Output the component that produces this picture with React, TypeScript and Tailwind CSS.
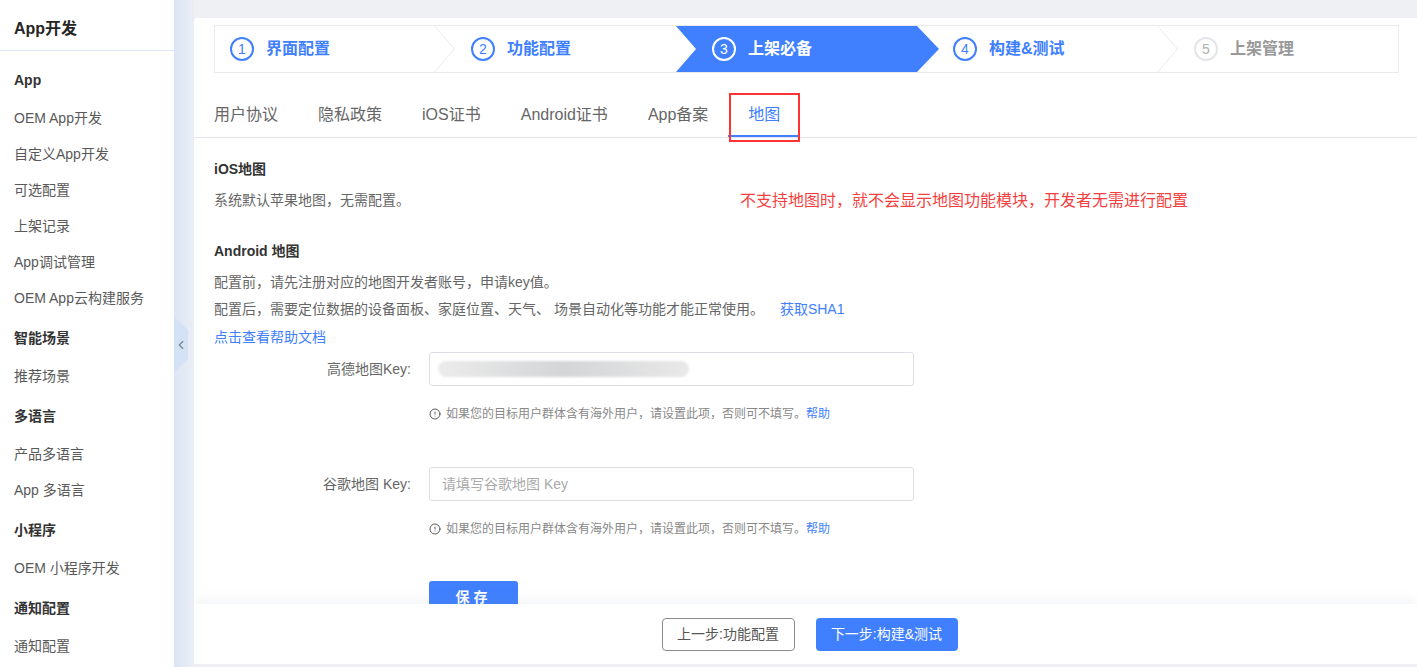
import { ChevronLeft, CircleAlert } from 'lucide-react';

const menu = [
  { title: 'App', items: ['OEM App开发', '自定义App开发', '可选配置', '上架记录', 'App调试管理', 'OEM App云构建服务'] },
  { title: '智能场景', items: ['推荐场景'] },
  { title: '多语言', items: ['产品多语言', 'App 多语言'] },
  { title: '小程序', items: ['OEM 小程序开发'] },
  { title: '通知配置', items: ['通知配置'] },
];

const steps = ['界面配置', '功能配置', '上架必备', '构建&测试', '上架管理'];
const tabs = ['用户协议', '隐私政策', 'iOS证书', 'Android证书', 'App备案', '地图'];

function Sidebar() {
  return (
    <aside className="w-[174px] shrink-0 bg-white flex flex-col">
      <div className="h-[51px] border-b border-[#dce6f2] px-[14px] pt-[8px] flex items-center text-[16px] font-bold text-[#262626]">
        App开发
      </div>
      <div className="pt-[7px]">
        {menu.map((group) => (
          <div key={group.title}>
            <div className="h-[42px] pt-[12px] px-[14px] leading-[20px] text-[14px] font-bold text-[#333]">{group.title}</div>
            {group.items.map((item) => (
              <div key={item} className="h-[36px] px-[14px] flex items-center text-[14px] text-[#595959]">
                {item}
              </div>
            ))}
          </div>
        ))}
      </div>
    </aside>
  );
}

function Steps() {
  const active = 2;
  return (
    <div className="h-[48px] border border-[#e8eaee] overflow-hidden">
      <div className="flex h-full ml-[-21px]">
        {steps.map((label, i) => {
          const isActive = i === active;
          const done = i < active || i === 3;
          return (
            <div key={label} className="relative w-[241px] shrink-0 h-full flex items-center pl-[36px]">
              {isActive && (
                <div className="absolute left-0 top-0 h-full w-[263px] bg-[#4080ff] [clip-path:polygon(0_0,241px_0,263px_50%,241px_100%,0_100%,20px_50%)]" />
              )}
              {!isActive && i !== active - 1 && i < 4 && (
                <svg className="absolute left-[240px] top-0 z-10" width="24" height="46" viewBox="0 0 24 46">
                  <polyline points="0.5,0 20.5,23 0.5,46" fill="none" stroke="#e8eaee" strokeWidth="1" />
                </svg>
              )}
              <div className="relative z-20 flex items-center">
                <span
                  className={`w-[24px] h-[24px] rounded-full border-2 flex items-center justify-center text-[14px] ${
                    isActive
                      ? 'border-white text-white'
                      : done
                        ? 'border-[#4080ff] text-[#4080ff]'
                        : 'border-[#e4e6ea] text-[#b0b0b0]'
                  }`}
                >
                  {i + 1}
                </span>
                <span
                  className={`ml-[12px] text-[16px] font-bold ${
                    isActive ? 'text-white' : done ? 'text-[#4080ff]' : 'text-[#999]'
                  }`}
                >
                  {label}
                </span>
              </div>
            </div>
          );
        })}
      </div>
    </div>
  );
}

function Hint() {
  return (
    <div className="ml-[215px] flex items-center h-[20px] text-[12px] text-[#888]">
      <CircleAlert size={12} className="text-[#333] mr-[5px]" strokeWidth={1.6} />
      如果您的目标用户群体含有海外用户，请设置此项，否则可不填写。
      <span className="text-[#4080ff]">帮助</span>
    </div>
  );
}

export default function App() {
  return (
    <div className="flex h-screen w-full overflow-hidden bg-[#eef0f4] [font-family:'Liberation_Sans','Noto_Sans_CJK_SC',sans-serif]">
      <Sidebar />
      <div className="relative w-[20px] shrink-0 bg-gradient-to-r from-[#dce5f4] to-[#eaeef5]">
        <div className="absolute left-0 top-[316px] w-[14px] h-[57px] bg-[#d5e2f6] flex items-center justify-center [clip-path:polygon(0_0,100%_14px,100%_43px,0_100%)]">
          <ChevronLeft size={16} className="text-[#7a8391]" strokeWidth={2} />
        </div>
      </div>
      <main className="flex-1 min-w-0 pt-[18px] pb-[3px] flex">
        <div className="flex-1 bg-white rounded-tl-[4px] flex flex-col overflow-hidden">
          <div className="flex-1 overflow-hidden">
            <div className="pt-[7px] pl-[20px] pr-[18px]">
              <Steps />
            </div>

            <div className="mt-[20px] h-[45px] border-b border-[#e4e8ee] flex">
              {tabs.map((tab) => {
                const isActive = tab === '地图';
                return (
                  <div
                    key={tab}
                    className={`relative h-[44px] px-[20px] flex items-center text-[16px] ${
                      isActive ? 'text-[#4080ff] border-b-2 border-[#4080ff] pt-[2px]' : 'text-[#666]'
                    }`}
                  >
                    {tab}
                    {isActive && <div className="absolute left-[1px] right-0 top-0 bottom-[-7px] border-2 border-[#f33]" />}
                  </div>
                );
              })}
            </div>

            <div className="px-[20px] pt-[21px]">
              <div className="leading-[20px] text-[14px] font-bold text-[#333]">iOS地图</div>
              <div className="relative mt-[11px] leading-[20px] text-[14px] text-[#666]">
                系统默认苹果地图，无需配置。
                <span className="absolute left-[526px] top-[1px] text-[16px] text-[#f53f3f] whitespace-nowrap">
                  不支持地图时，就不会显示地图功能模块，开发者无需进行配置
                </span>
              </div>

              <div className="mt-[31px] leading-[20px] text-[14px] font-bold text-[#333]">Android 地图</div>
              <div className="mt-[8px] h-[27px] flex items-center text-[14px] text-[#666]">
                配置前，请先注册对应的地图开发者账号，申请key值。
              </div>
              <div className="h-[27px] flex items-center text-[14px] text-[#666]">
                配置后，需要定位数据的设备面板、家庭位置、天气、 场景自动化等功能才能正常使用。
                <span className="ml-[16px] text-[#4080ff]">获取SHA1</span>
              </div>
              <div className="h-[28px] flex items-center text-[14px] text-[#4080ff]">点击查看帮助文档</div>

              <div className="flex items-center mt-[1px]">
                <label className="w-[215px] pr-[18px] text-right text-[14px] text-[#666]">高德地图Key:</label>
                <div className="w-[485px] h-[34px] border border-[#dcdfe6] rounded-[3px] flex items-center pl-[8px]">
                  <div className="w-[251px] h-[16px] rounded-full blur-[1px] bg-gradient-to-r from-[#ececec] via-[#d4d5d7] to-[#e9e9e9]" />
                </div>
              </div>
              <div className="mt-[18px]">
                <Hint />
              </div>

              <div className="flex items-center mt-[43px]">
                <label className="w-[215px] pr-[18px] text-right text-[14px] text-[#666]">谷歌地图 Key:</label>
                <input
                  className="w-[485px] h-[34px] border border-[#dcdfe6] rounded-[3px] px-[12px] text-[14px] outline-none placeholder:text-[#aaa]"
                  placeholder="请填写谷歌地图 Key"
                />
              </div>
              <div className="mt-[18px]">
                <Hint />
              </div>

              <button className="mt-[42px] ml-[215px] w-[89px] h-[32px] rounded-[3px] bg-[#4080ff] text-white text-[14px] font-bold tracking-[4px]">
                保存
              </button>
            </div>
          </div>

          <div className="relative z-10 h-[60px] shrink-0 bg-white flex items-center justify-center gap-[21px] pl-[8px] shadow-[0_-6px_10px_rgba(120,130,150,0.07)]">
            <button className="w-[133px] h-[33px] rounded-[4px] border border-[#8c8c8c] text-[14px] text-[#555]">
              上一步:功能配置
            </button>
            <button className="w-[142px] h-[33px] rounded-[4px] bg-[#4080ff] text-[14px] text-white">
              下一步:构建&测试
            </button>
          </div>
        </div>
      </main>
    </div>
  );
}
